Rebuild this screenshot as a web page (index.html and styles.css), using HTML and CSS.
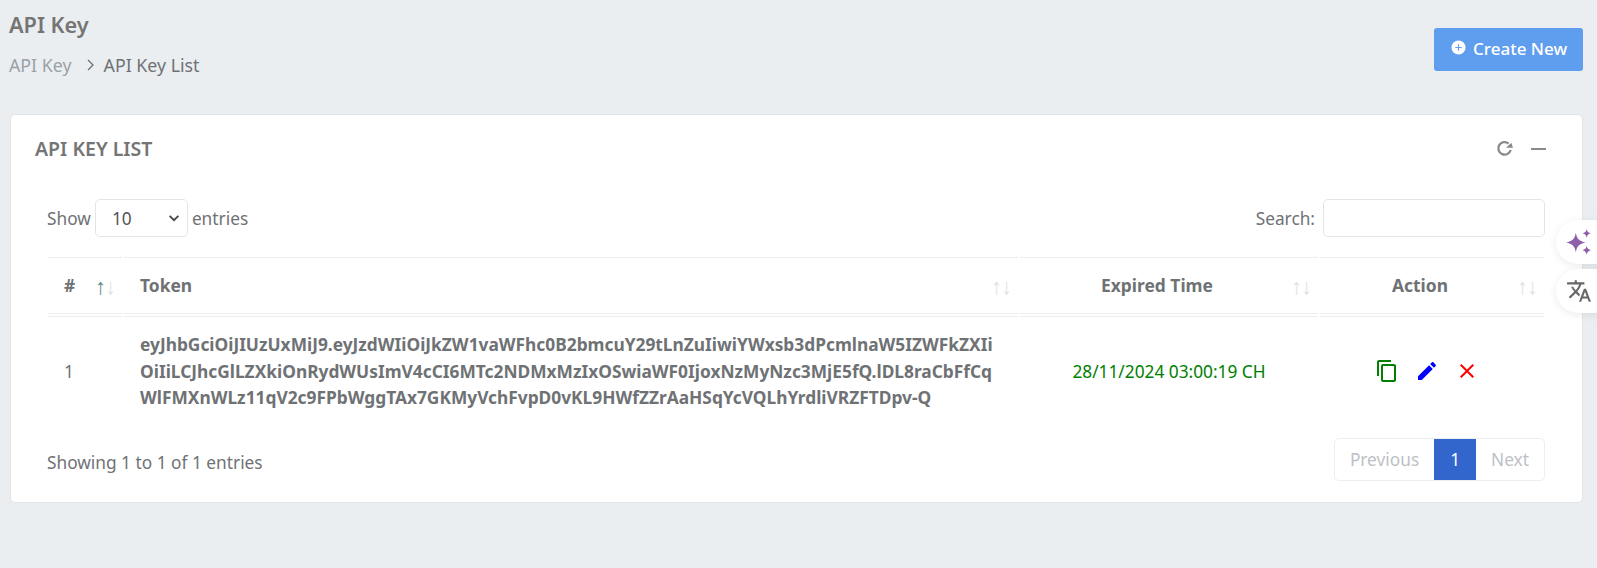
FILE: index.html
```html
<!DOCTYPE html>
<html lang="en">
<head>
    <meta charset="UTF-8">
    <meta name="viewport" content="width=device-width, initial-scale=1.0">
    <title>API Key List</title>
    <link rel="stylesheet" href="styles.css">
</head>
<body>
    <header class="page-head">
        <div>
            <h1 class="page-title">API Key</h1>
            <nav class="crumbs">
                <a class="crumb-link">API Key</a>
                <svg class="crumb-sep" viewBox="0 0 10 12"><path d="M2 1l5 5-5 5" fill="none" stroke="currentColor" stroke-width="1.3"/></svg>
                <span>API Key List</span>
            </nav>
        </div>
        <button class="btn-create">
            <svg class="plus-icon" viewBox="0 0 16 16"><circle cx="8" cy="8" r="7.5" fill="#fff"/><path d="M8 4.6v6.8M4.6 8h6.8" stroke="#5f9dee" stroke-width="1.2"/></svg>
            Create New
        </button>
    </header>

    <section class="card">
        <div class="card-head">
            <h2>API KEY LIST</h2>
            <div class="card-tools">
                <svg class="tool-icon" viewBox="0 0 16 16"><path d="M13.8 9.400A5.900 5.900 0 1 1 11.800 3.300" fill="none" stroke="#8a8a8a" stroke-width="2.200"/><path d="M16 7.400H9.400l5-4.800z" fill="#8a8a8a"/></svg>
                <span class="tool-minus"></span>
            </div>
        </div>

        <div class="table-top">
            <label class="length-ctl">Show
                <span class="fake-select">10
                    <svg viewBox="0 0 16 16"><path d="M3 5.5l5 5 5-5" fill="none" stroke="#444" stroke-width="2"/></svg>
                </span>
                entries</label>
            <label class="search-ctl">Search: <input type="text" class="search-input"></label>
        </div>

        <table class="key-table">
            <thead>
                <tr>
                    <th class="col-id">#<span class="sort"><b class="on">↑</b>↓</span></th>
                    <th class="col-token">Token<span class="sort">↑↓</span></th>
                    <th class="col-time">Expired Time<span class="sort">↑↓</span></th>
                    <th class="col-action">Action<span class="sort">↑↓</span></th>
                </tr>
            </thead>
            <tbody>
                <tr>
                    <td class="cell-id">1</td>
                    <td class="cell-token">eyJhbGciOiJIUzUxMiJ9.eyJzdWIiOiJkZW1vaWFhc0B2bmcuY29tLnZuIiwiYWxsb3dPcmlnaW5IZWFkZXIiOiIiLCJhcGlLZXkiOnRydWUsImV4cCI6MTc2NDMxMzIxOSwiaWF0IjoxNzMyNzc3MjE5fQ.lDL8raCbFfCqWlFMXnWLz11qV2c9FPbWggTAx7GKMyVchFvpD0vKL9HWfZZrAaHSqYcVQLhYrdliVRZFTDpv-Q</td>
                    <td class="cell-time">28/11/2024 03:00:19 CH</td>
                    <td class="cell-action">
                        <div class="actions">
                            <svg viewBox="0 0 24 24" fill="#008000"><path d="M16 1H4c-1.1 0-2 .9-2 2v14h2V3h12V1zm3 4H8c-1.1 0-2 .9-2 2v14c0 1.1.9 2 2 2h11c1.1 0 2-.9 2-2V7c0-1.1-.9-2-2-2zm0 16H8V7h11v14z"/></svg>
                            <svg viewBox="0 0 24 24" fill="#0000ff"><path d="M3 17.25V21h3.75L17.81 9.94l-3.75-3.75L3 17.25zM20.71 7.04c.39-.39.39-1.02 0-1.41l-2.34-2.34c-.39-.39-1.02-.39-1.41 0l-1.83 1.83 3.75 3.75 1.83-1.83z"/></svg>
                            <svg viewBox="0 0 24 24" fill="#ff0000"><path d="M19 6.41L17.59 5 12 10.59 6.41 5 5 6.41 10.59 12 5 17.59 6.41 19 12 13.41 17.59 19 19 17.59 13.41 12z"/></svg>
                        </div>
                    </td>
                </tr>
            </tbody>
        </table>

        <div class="table-bottom">
            <div class="table-info">Showing 1 to 1 of 1 entries</div>
            <ul class="pager">
                <li class="pager-off">Previous</li>
                <li class="pager-on">1</li>
                <li class="pager-off">Next</li>
            </ul>
        </div>
    </section>

    <button class="float-btn float-ai">
        <svg viewBox="0 0 24 24" fill="#8e5ea8"><path d="M10 3.500c.9 5.500 3.400 8 9 9-5.600 1-8.100 3.500-9 9-.9-5.500-3.400-8-9-9 5.600-1 8.100-3.500 9-9z"/><path d="M20 0c.4 2.300 1.500 3.500 4 4-2.500.5-3.600 1.700-4 4-.4-2.300-1.500-3.500-4-4 2.500-.5 3.600-1.700 4-4z"/><path d="M20 15.500c.4 2.300 1.500 3.500 4 4-2.500.5-3.600 1.700-4 4-.4-2.300-1.500-3.500-4-4 2.500-.5 3.600-1.700 4-4z"/></svg>
    </button>
    <button class="float-btn float-lang">
        <svg viewBox="0 0 24 24" fill="#666"><path d="M12.870 15.070l-2.540-2.510.03-.03c1.740-1.940 2.980-4.170 3.710-6.530H17V4h-7V2H8v2H1v1.990h11.170C11.500 7.920 10.440 9.750 9 11.350 8.070 10.320 7.300 9.190 6.690 8h-2c.73 1.630 1.730 3.170 2.980 4.560l-5.090 5.020L4 19l5-5 3.110 3.110.76-2.040zM18.500 10h-2L12 22h2l1.120-3h4.750L21 22h2l-4.500-12zm-2.620 7l1.620-4.330L19.120 17h-3.240z"/></svg>
    </button>
</body>
</html>
```

FILE: styles.css
```css
:root {
    --bg: #eaeef1;
    --text: #6f7275;
    --line: #eceef1;
    --border: #e2e5e8;
    --blue: #5f9dee;
    --blue-dark: #3366cc;
}

* {
    margin: 0;
    padding: 0;
    box-sizing: border-box;
}

body {
    font-family: "Noto Sans", sans-serif;
    font-size: 17.3px;
    color: var(--text);
    background: var(--bg);
    height: 568px;
    overflow: hidden;
    padding: 0 14px 0 9px;
}

.page-head {
    display: flex;
    justify-content: space-between;
    height: 114px;
    padding-top: 9px;
}

.page-title {
    font-size: 21.7px;
    font-weight: 600;
    line-height: 32px;
    color: #757575;
}

.crumbs {
    display: flex;
    align-items: center;
    margin-top: 9px;
    font-size: 17.8px;
    line-height: 30px;
}

.crumb-link {
    color: #9aa1a8;
}

.crumb-sep {
    width: 10px;
    height: 12px;
    margin: 0 8px 0 14px;
}

.btn-create {
    display: flex;
    align-items: center;
    gap: 7px;
    width: 149px;
    height: 43px;
    margin-top: 19px;
    padding: 0 0 2px 17px;
    border: 0;
    border-radius: 3px;
    background: var(--blue);
    color: #fff;
    font: 500 17px "Noto Sans", sans-serif;
}

.plus-icon {
    width: 15px;
    height: 15px;
    margin-top: -2px;
}

.card {
    margin-left: 1px;
    height: 389px;
    padding: 0 37px 0 36px;
    background: #fff;
    border: 1px solid var(--border);
    border-radius: 5px;
}

.card-head {
    display: flex;
    justify-content: space-between;
    align-items: center;
    height: 66px;
    margin: 0 -1px 0 -12px;
}

.card-head h2 {
    font-size: 19.5px;
    font-weight: 600;
    color: #757575;
}

.card-tools {
    display: flex;
    align-items: center;
    gap: 18px;
    margin-top: 1px;
}

.tool-icon {
    width: 17px;
    height: 17px;
}

.tool-minus {
    width: 15px;
    height: 2px;
    background: #8a8a8a;
}

.table-top {
    display: flex;
    justify-content: space-between;
    align-items: center;
    height: 38px;
    margin-top: 18px;
}

.length-ctl, .search-ctl {
    display: flex;
    align-items: center;
    gap: 4px;
}

.search-ctl {
    gap: 8px;
}

.fake-select {
    display: flex;
    align-items: center;
    justify-content: space-between;
    width: 93px;
    height: 38px;
    padding: 0 6px 0 16px;
    border: 1px solid var(--border);
    border-radius: 5px;
    color: #555;
}

.fake-select svg {
    width: 14px;
    height: 14px;
}

.search-input {
    width: 222px;
    height: 38px;
    border: 1px solid var(--border);
    border-radius: 5px;
}

.key-table {
    width: calc(100% + 2px);
    margin: 20px 0 0 -1px;
    border-collapse: separate;
    border-spacing: 2px 0;
    table-layout: fixed;
}

.key-table th {
    position: relative;
    height: 60px;
    padding: 0 16px 2px;
    border-top: 1px solid var(--line);
    border-bottom: 4px double var(--line);
    font-size: 17.4px;
    font-weight: 700;
    text-align: left;
}

.sort {
    position: absolute;
    right: 7px;
    top: 12px;
    font-weight: 400;
    font-size: 22px;
    letter-spacing: -1px;
    color: #dfe2e5;
}

.sort .on {
    font-weight: 400;
    color: #5f8f86;
}

.col-id { width: 74px; }
.col-token { width: 894px; }
.col-time { width: 298px; }

.key-table .col-time, .key-table .col-action {
    padding-right: 40px;
    text-align: center;
}

.key-table td {
    height: 108px;
    padding: 0 16px;
}

.cell-token {
    font-size: 17.34px;
    font-weight: 700;
    line-height: 26.4px;
    word-break: break-all;
}

.cell-time {
    text-align: center;
    color: #008000;
}

.key-table .cell-action {
    padding-right: 26px;
}

.actions {
    display: flex;
    justify-content: center;
    gap: 16px;
}

.actions svg {
    width: 24px;
    height: 24px;
}

.table-bottom {
    display: flex;
    justify-content: space-between;
    align-items: center;
    margin-top: 13px;
}

.table-info {
    padding-top: 6px;
}

.pager {
    display: flex;
    list-style: none;
    height: 43px;
    border: 1px solid var(--line);
    border-radius: 5px;
}

.pager li {
    display: flex;
    align-items: center;
    padding: 0 15px;
}

.pager .pager-on {
    padding: 0 16px;
    background: var(--blue-dark);
    color: #fff;
}

.pager-off {
    color: #bdc1c6;
}

.float-btn {
    position: absolute;
    left: 1556px;
    width: 60px;
    height: 44px;
    padding-left: 10px;
    border: 0;
    border-radius: 22px;
    background: #fff;
    box-shadow: 0 2px 8px rgba(0, 0, 0, 0.08);
    text-align: left;
}

.float-btn svg {
    display: block;
    width: 26px;
    height: 26px;
}

.float-ai {
    top: 220px;
    padding-left: 9px;
}

.float-lang {
    top: 269px;
}
```
